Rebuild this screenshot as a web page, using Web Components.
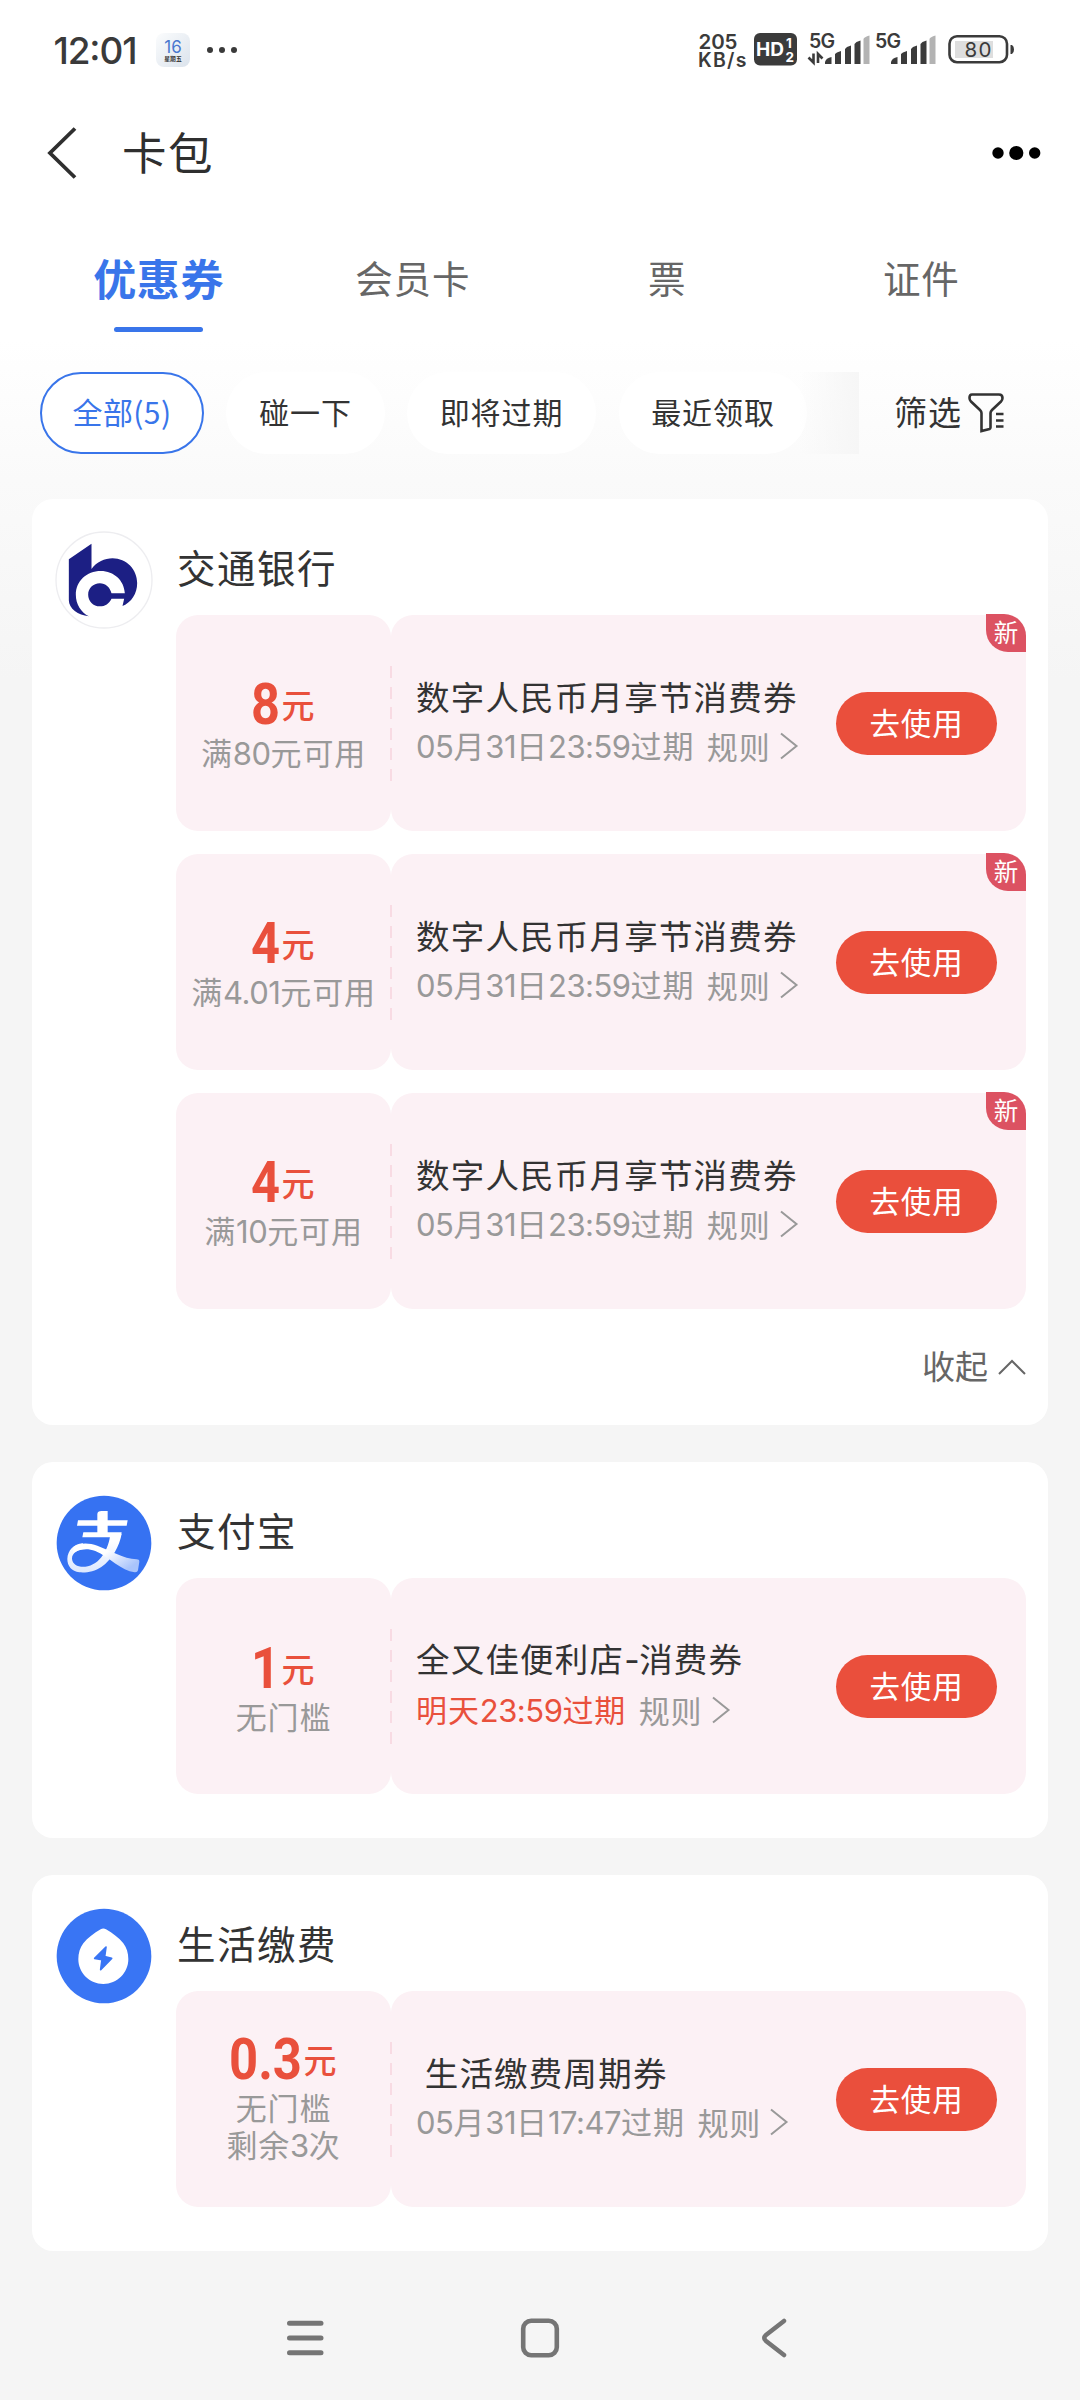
<!DOCTYPE html>
<html lang="zh-CN">
<head>
<meta charset="utf-8">
<title>卡包</title>
<style>
html,body{margin:0;padding:0}
body{width:1080px;height:2400px;overflow:hidden;font-family:"Noto Sans CJK SC","Noto Sans",sans-serif;color:#333;background:linear-gradient(180deg,#fff 0,#fff 340px,#fafafa 480px,#f5f5f5 680px,#f5f5f5 100%)}
</style>
</head>
<body>
<card-wallet></card-wallet>
<script>
function define(name, html){
  customElements.define(name, class extends HTMLElement{
    connectedCallback(){
      if(this.shadowRoot) return;
      const root=this.attachShadow({mode:'open'});
      root.innerHTML=typeof html==='function'?html(this):html;
    }
  });
}
// Latin runs inside Chinese copy get their own face and tracking.
const latin=s=>s.replace(/[\d:.\-]+/g,'<i>$&</i>');

const bars=x=>`<g transform="translate(${x} 0)" fill="#3b3b3b">
  <path d="M0 64V62Q1 58 6.500 57V64Z"/><path d="M10 64V54L12 52.500 16 51V64Z"/><path d="M20 64V49L22 47 26 45.500V64Z"/><path d="M29.500 64V44L31.500 42 35.500 40.500V64Z"/>
  <path fill="#b3b3b3" d="M38.500 64V39Q39 37 44.500 35.500V64Z"/></g>`;

define('status-bar',`<style>
:host{display:flex;height:100px;align-items:center;justify-content:space-between;padding:0 60px 0 53px}
.left{display:flex;align-items:center;gap:15px}
svg{display:block;flex:none}
</style>
<div class="left"><svg width="88" height="60" viewBox="53 20 88 60"><text x="53.500" y="63.500" font-family="Inter" font-size="37" font-weight="500" fill="#3a3a3a" textLength="84">12:01</text></svg>
<svg width="84" height="100" viewBox="156 0 84 100"><defs><linearGradient id="c" x2="1" y2="1"><stop stop-color="#fbfcfd"/><stop offset="1" stop-color="#dbe3ec"/></linearGradient></defs>
<rect x="156" y="33" width="34" height="34" rx="8" fill="url(#c)"/>
<text x="173" y="52.500" font-size="17" text-anchor="middle" fill="#4a78cf" font-family="Inter">16</text>
<text x="173" y="61" font-size="5.800" font-weight="700" text-anchor="middle" fill="#333" font-family="Noto Sans CJK SC">星期五</text>
<g fill="#3a3a3a"><circle cx="210" cy="50" r="3"/><circle cx="222" cy="50" r="3"/><circle cx="234" cy="50" r="3"/></g></svg></div>
<svg width="325" height="100" viewBox="695 0 325 100" font-family="Inter" fill="#3b3b3b">
<text x="698.500" y="49" font-size="20.500" font-weight="600" textLength="39">205</text>
<text x="698" y="67" font-size="19.500" font-weight="600" textLength="48.500">KB/s</text>
<rect x="754" y="33" width="43" height="32.500" rx="6"/>
<g fill="#fff" font-weight="700"><text x="756" y="56" font-size="18.500" textLength="28" lengthAdjust="spacingAndGlyphs">HD</text><text x="786" y="47.500" font-size="13.500">1</text><text x="785.500" y="61.500" font-size="13.500">2</text></g>
<text x="809" y="48" font-size="19.500" font-weight="600" textLength="26">5G</text>
<text x="875" y="48" font-size="19.500" font-weight="600" textLength="26">5G</text>
<path d="M813.500 53.500V62.500L808.500 57.500M818 63V54L822.500 58.500" stroke="#3b3b3b" stroke-width="2.600" fill="none"/>
${bars(825)}${bars(891)}
<rect x="955" y="41" width="38" height="17" fill="#dedede"/>
<rect x="949.500" y="36.200" width="57.500" height="26" rx="7.500" fill="none" stroke="#3b3b3b" stroke-width="2.600"/>
<path d="M1010.500 45h1.500q2 1 2 4.500t-2 4.500h-1.500z"/>
<text x="964.500" y="57" font-size="20.500" textLength="27">80</text>
</svg>`);

define('page-header',`<style>
:host{display:flex;height:106px;align-items:center;padding:0 39px 0 47px}
h1{margin:0 auto 0 45px;font-size:44.500px;line-height:60px;padding-bottom:5px;font-weight:400;letter-spacing:1.500px;color:#2f2f2f}
svg{display:block}
</style>
<svg width="30" height="52" viewBox="0 0 30 52"><path d="M28 1.500 3 26 28 50.500" fill="none" stroke="#2f2f2f" stroke-width="3.800"/></svg>
<h1>卡包</h1>
<svg width="49" height="16" viewBox="0 0 49 16"><circle cx="6" cy="8" r="5.700"/><circle cx="24.300" cy="8" r="7.100"/><circle cx="42.700" cy="8" r="5.700"/></svg>`);

define('category-tabs',`<style>
:host{display:flex;height:166px;padding:0 31.500px;box-sizing:border-box}
.t{flex:1;display:flex;flex-direction:column;align-items:center;font-size:37.500px;line-height:60px;letter-spacing:1px;color:#666;padding-top:41px}
.on{font-size:43px;font-weight:700;letter-spacing:.6px;color:#3975ea}
.on::after{content:"";width:89px;height:5px;border-radius:3px;background:#3975ea;margin-top:19.500px}
</style><div class="t on">优惠券</div><div class="t">会员卡</div><div class="t">票</div><div class="t">证件</div>`);

define('filter-bar',`<style>
:host{display:flex;height:82px;padding:0 76px 0 40px;align-items:center;justify-content:space-between}
.chips{display:flex;gap:22.500px;width:818.500px;height:82px;overflow:hidden;position:relative}
.chips::after{content:"";position:absolute;right:0;top:0;width:60px;height:82px;background:linear-gradient(90deg,#f8f8f800,#f6f6f6)}
.c{box-sizing:border-box;height:82px;padding:0 32.700px;border-radius:42px;background:#fff;line-height:79px;font-size:30px;letter-spacing:.9px;color:#333;white-space:nowrap;flex:none}
.on{border:2.500px solid #3975ea;color:#3975ea;line-height:75px;padding:0 30.500px;letter-spacing:.4px}
.f{display:flex;align-items:center;gap:6px;font-size:33px;letter-spacing:1px;white-space:nowrap}
.f span{padding-bottom:4px}
svg{display:block}
</style><div class="chips"><span class="c on">全部(5)</span><span class="c">碰一下</span><span class="c">即将过期</span><span class="c">最近领取</span></div>
<div class="f"><span>筛选</span><svg width="36" height="40" viewBox="0 0 36 40" fill="none" stroke="#333" stroke-width="2.600"><path d="M4 1.500H31Q34.500 1.500 34.500 5 34.500 7 33 8.500L24 17Q22.500 18.500 22.500 20V34.500Q22.500 35.500 21.500 36L13.500 38V20Q13.500 18.500 12 17L3 8.500Q1.500 7 1.500 5 1.500 1.500 4 1.500Z"/><path d="M28 21H35.500M28 27.500H35.500M28 33.500H35.500"/></svg></div>`);

define('merchant-card',`<style>
:host{display:grid;box-sizing:border-box;margin:0 32px;padding:32px 22px 44px 23px;border-radius:21px;background:#fff;grid-template-columns:98px 850px;column-gap:23px;align-items:start}
h2{margin:0;height:84px;line-height:70px;font-size:38.500px;letter-spacing:1.500px;font-weight:400;color:#333;padding-left:1px}
.list{display:flex;flex-direction:column;gap:23px}
::slotted([slot=logo]){display:block}
</style><slot name="logo"></slot><div><h2><slot name="name"></slot></h2><div class="list"><slot></slot></div><slot name="more"></slot></div>`);

define('coupon-item',el=>{
  const a=n=>el.getAttribute(n);
  const w=a('amount').length>1?73:29;
  return `<style>
:host{display:flex;height:216px;position:relative}
i{font-style:normal;font-family:Inter,sans-serif;letter-spacing:-.5px}
.stub{width:215px;box-sizing:border-box;border-radius:22px;background:#fcf1f5;display:flex;flex-direction:column;align-items:center;justify-content:center;color:#999;font-size:31px;line-height:37.500px;letter-spacing:.8px;white-space:nowrap;padding-bottom:1px}
.amt{display:flex;align-items:center;height:59.500px;color:#e9503c;gap:2px;font-size:33px;line-height:42px;letter-spacing:0;margin-left:-2px}
.amt b{font-weight:500;padding-top:2px}
.two{padding-bottom:5px}
.main{flex:1;border-radius:22px;background:#fcf1f5;display:flex;justify-content:space-between;align-items:center;padding:0 29px 0 25px}
.text{padding-bottom:3px}
.dash{position:absolute;left:213.500px;top:51px;width:2px;height:115px;background:repeating-linear-gradient(180deg,#f8dbe3 0 12px,transparent 12px 20.600px)}
.title{font-size:33.500px;line-height:48px;letter-spacing:1.200px;color:#333;white-space:pre}
.meta{display:flex;align-items:center;font-size:31px;line-height:50px;letter-spacing:.9px;color:#999;white-space:nowrap}
.exp{margin-right:12.500px}.hot{color:#e9503c}
.meta svg{margin-left:8px}
.go{width:161px;height:63px;border-radius:32px;background:#ea4f3c;color:#fff;font-size:30.500px;letter-spacing:.8px;line-height:60px;text-align:center}
.new{position:absolute;right:0;top:-1px;width:40px;height:38px;border-radius:0 22px 0 22px;background:#dc5262;color:#fff;font-size:24.500px;line-height:36px;text-align:center}
svg{display:block;overflow:visible}
</style>
<div class="stub${a('extra')?' two':''}"><div class="amt"><svg width="${w}" height="59.500" viewBox="0 0 ${w} 59.500"><text x="0" y="51" font-family="Roboto" font-weight="700" font-size="57" fill="#e9503c" textLength="${w}" lengthAdjust="spacingAndGlyphs">${a('amount')}</text></svg><b>元</b></div><span>${latin(a('limit'))}</span>${a('extra')?`<span>${latin(a('extra'))}</span>`:''}</div>
<div class="main"><div class="text"><div class="title">${latin(a('name'))}</div><div class="meta"><span class="exp${el.hasAttribute('urgent')?' hot':''}">${latin(a('expire'))}</span><span>规则</span><svg width="20" height="28" viewBox="0 0 20 28"><path d="M2 1.500 17.500 14 2 26.500" fill="none" stroke="#999" stroke-width="2"/></svg></div></div><div class="go">去使用</div></div>
<span class="dash"></span>${el.hasAttribute('fresh')?'<div class="new">新</div>':''}`;
});

define('fold-toggle',`<style>
:host{display:flex;justify-content:flex-end;align-items:center;gap:10px;height:116px;margin-bottom:-44px;font-size:33px;line-height:60px;color:#666}
span{padding-bottom:4px}svg{display:block}
</style><span>收起</span><svg width="28" height="16" viewBox="0 0 28 16"><path d="M1 15 14 2 27 15" fill="none" stroke="#666" stroke-width="2"/></svg>`);

const logos={
bocom:`<svg width="98" height="98" viewBox="106 152 293 294"><circle cx="252.500" cy="299" r="144" fill="#fff" stroke="#ededf0" stroke-width="4"/><path fill="#1c1f84" d="M147 237 215 190V266C230 245 255 234 278 234 320 234 352 268 352 308 352 340 335 366 308 377L313 355H275C268 370 256 378 240 378 220 378 205 362 205 343 205 324 220 309 240 309 257 309 270 320 275 339H315C313 300 282 272 243 272 200 272 168 303 168 343 168 372 184 396 207 408 175 405 147 385 147 360Z"/></svg>`,
alipay:`<svg width="98" height="98" viewBox="105 161 294 294"><defs><linearGradient id="a" x1="0" x2="1" y1="0" y2=".6"><stop stop-color="#fff"/><stop offset=".5" stop-color="#fff"/><stop offset="1" stop-color="#a9c4fb"/></linearGradient><linearGradient id="b" x1="0" x2="0" y1="0" y2="1"><stop offset=".2" stop-color="#fff"/><stop offset="1" stop-color="#dce7fe"/></linearGradient></defs><circle cx="252" cy="308" r="142" fill="#3672f2"/>
<path fill="#fff" d="M174 240H232V222Q232 212 245 212H263V240H323L320 256H263V276H305L302 291H187L190 276H232V256H171Z"/>
<path fill="url(#b)" d="M271 280H305C298 318 277 356 244 380 224 394 198 398 178 396 155 392 142 378 142 356 143 330 162 311 188 309L200 326C174 326 156 338 156 355 157 372 174 381 196 379 240 374 267 325 271 280Z"/>
<path fill="url(#a)" d="M160 320C174 308 204 305 232 316 270 330 310 355 350 357Q358 357 358 364L354 390Q352 397 344 396C304 392 268 350 226 332 202 323 176 326 160 338Z"/></svg>`,
life:`<svg width="98" height="98" viewBox="105 141 294 294"><circle cx="252" cy="288" r="142" fill="#3975f4"/><path fill="#fff" d="M242 208Q250 203 258 208C278 219 297 234 310 250 320 263 325 280 325 298 325 339 291 372 250 372 209 372 175 339 175 298 175 280 180 263 190 250 203 234 222 219 242 208Z"/><path fill="#3975f4" stroke="#3975f4" stroke-width="5" stroke-linejoin="round" d="M258 261 224 295 246 299 242 329 275 295 254 290Z"/></svg>`};
define('merchant-logo',el=>`<style>:host{display:block}svg{display:block}</style>${logos[el.getAttribute('kind')]}`);

define('system-nav',`<style>
:host{display:flex;height:148px;align-items:center;justify-content:space-between;padding:24px 292px 0 286px;box-sizing:border-box}svg{display:block}svg+svg{margin-left:-4px}svg:last-child{margin-left:0}
</style><svg width="38" height="40" viewBox="0 0 38 40" stroke="#757575" stroke-width="5" stroke-linecap="round"><path d="M3.500 5.300H35M3.500 20H35M3.500 34.700H35"/></svg>
<svg width="40" height="40" viewBox="0 0 40 40"><rect x="3.200" y="2.700" width="33.600" height="34.600" rx="8" fill="none" stroke="#757575" stroke-width="4.600"/></svg>
<svg width="28" height="40" viewBox="0 0 28 40"><path d="M24 3 6 17Q2.500 20 6 23L24 37" fill="none" stroke="#757575" stroke-width="4.500" stroke-linecap="round"/></svg>`);

const bocomItem=(amount,limit)=>`<coupon-item amount="${amount}" limit="${limit}" name="数字人民币月享节消费券" expire="05月31日23:59过期" fresh></coupon-item>`;
define('card-wallet',`<style>:host{display:flex;flex-direction:column;height:2400px}.cards{display:flex;flex-direction:column;gap:37px;margin-top:45px;height:1753px}</style>
<status-bar></status-bar><page-header></page-header><category-tabs></category-tabs><filter-bar></filter-bar>
<div class="cards">
<merchant-card><merchant-logo slot="logo" kind="bocom"></merchant-logo><span slot="name">交通银行</span>${bocomItem('8','满80元可用')}${bocomItem('4','满4.01元可用')}${bocomItem('4','满10元可用')}<fold-toggle slot="more"></fold-toggle></merchant-card>
<merchant-card><merchant-logo slot="logo" kind="alipay"></merchant-logo><span slot="name">支付宝</span><coupon-item amount="1" limit="无门槛" name="全又佳便利店-消费券" expire="明天23:59过期" urgent></coupon-item></merchant-card>
<merchant-card><merchant-logo slot="logo" kind="life"></merchant-logo><span slot="name">生活缴费</span><coupon-item amount="0.3" limit="无门槛" extra="剩余3次" name=" 生活缴费周期券" expire="05月31日17:47过期"></coupon-item></merchant-card>
</div><system-nav></system-nav>`);
</script>
</body>
</html>
